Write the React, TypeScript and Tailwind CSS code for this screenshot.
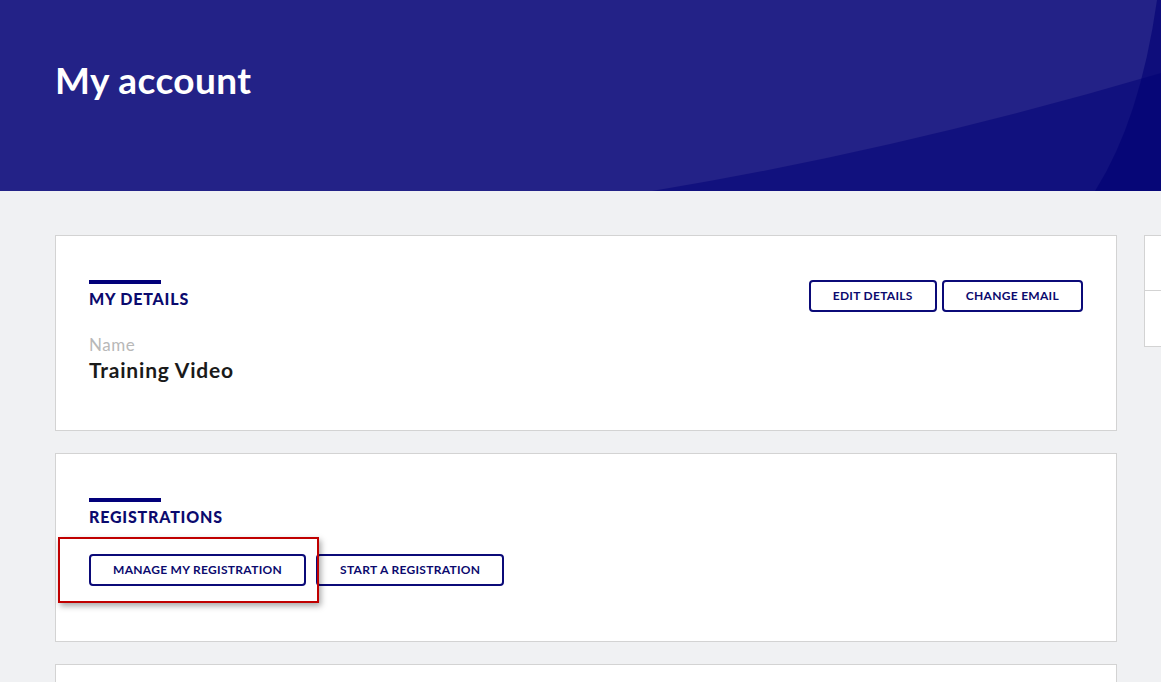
import React from "react";

function Btn({ children }: { children: React.ReactNode }) {
  return (
    <button className="h-[32px] px-[22px] border-2 border-[#0b0a78] rounded-[4px] bg-white text-[12px] font-bold text-[#0b0a6e] uppercase leading-none whitespace-nowrap tracking-[0.3px]">
      {children}
    </button>
  );
}

function Heading({ children }: { children: React.ReactNode }) {
  return (
    <div>
      <div className="w-[72px] h-[4px] bg-[#02007a]" />
      <div className="mt-[5px] text-[16px] leading-[20px] font-black text-[#0b0a6e] uppercase tracking-[0.8px]">
        {children}
      </div>
    </div>
  );
}

export default function App() {
  return (
    <div className="w-[1161px] h-[682px] overflow-hidden bg-[#f0f1f3] font-['Lato',sans-serif]">
      <header className="relative h-[191px] bg-[#232287] overflow-hidden">
        <svg
          className="absolute inset-0"
          width="1161"
          height="191"
          viewBox="0 0 1161 191"
        >
          <path d="M652 191 Q900 150 1161 73 L1161 191 Z" fill="rgba(0,0,118,0.5)" />
          <path d="M1157 0 Q1140 120 1095 191 L1161 191 L1161 0 Z" fill="rgba(0,0,115,0.6)" />
        </svg>
        <h1 className="relative pl-[55px] pt-[61px] text-[37px] leading-[37px] font-bold text-white tracking-[0.4px]">
          My account
        </h1>
      </header>

      <main className="flex gap-[27px] pl-[55px] pt-[44px]">
        <div className="flex flex-col gap-[22px] w-[1062px] shrink-0">
          <section className="h-[196px] bg-white border border-[#d3d3d3] pt-[44px] px-[33px] flex justify-between items-start">
            <div>
              <Heading>My details</Heading>
              <div className="mt-[26px] text-[17px] leading-[20px] text-[#b8b8b8] tracking-[0.5px]">Name</div>
              <div className="mt-[3px] text-[21px] leading-[24px] font-bold text-[#1a1a1a] tracking-[0.8px]">
                Training Video
              </div>
            </div>
            <div className="flex gap-[5px]">
              <Btn>Edit details</Btn>
              <Btn>Change email</Btn>
            </div>
          </section>

          <section className="h-[189px] bg-white border border-[#d3d3d3] pt-[44px] px-[33px]">
            <Heading>Registrations</Heading>
            <div className="relative mt-[27px] flex gap-[10px]">
              <div className="absolute left-[-31px] top-[-17px] w-[261px] h-[66px] border-2 border-[#c00000] shadow-[2px_3px_6px_rgba(0,0,0,0.35)]" />
              <Btn>Manage my registration</Btn>
              <Btn>Start a registration</Btn>
            </div>
          </section>

          <section className="h-[120px] bg-white border border-[#d3d3d3]" />
        </div>

        <aside className="w-[300px] shrink-0">
          <div className="h-[112px] bg-white border border-[#d3d3d3] flex flex-col">
            <div className="h-[55px] border-b border-[#d3d3d3]" />
            <div className="flex-1" />
          </div>
        </aside>
      </main>
    </div>
  );
}
